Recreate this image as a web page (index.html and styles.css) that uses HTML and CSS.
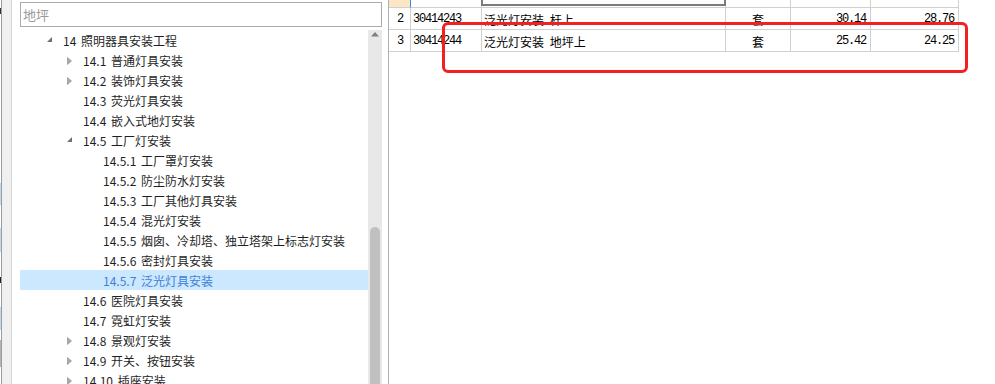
FILE: index.html
```html
<!DOCTYPE html>
<html lang="zh-CN">
<head>
<meta charset="utf-8">
<title>定额查询</title>
<link rel="stylesheet" href="styles.css">
</head>
<body>
<div class="app">
  <div class="edge"><div class="edge-strip"></div><div class="edge-line"></div><div class="edge-fill"></div></div>
  <div class="left">
    <div class="search">地坪</div>
    <div class="tree-wrap">
      <ul class="tree">
        <li class="row l0"><span class="arr"><svg width="6" height="6" viewBox="0 0 6 6"><path d="M5 0V5H0Z" class="exp"/></svg></span>14 照明器具安装工程</li>
        <li class="row l1"><span class="arr"><svg width="5" height="8" viewBox="0 0 5 8"><path d="M0.5 0.5L4.5 4L0.5 7.5Z" class="col"/></svg></span>14.1 普通灯具安装</li>
        <li class="row l1"><span class="arr"><svg width="5" height="8" viewBox="0 0 5 8"><path d="M0.5 0.5L4.5 4L0.5 7.5Z" class="col"/></svg></span>14.2 装饰灯具安装</li>
        <li class="row l1"><span class="arr"></span>14.3 荧光灯具安装</li>
        <li class="row l1"><span class="arr"></span>14.4 嵌入式地灯安装</li>
        <li class="row l1"><span class="arr"><svg width="6" height="6" viewBox="0 0 6 6"><path d="M5 0V5H0Z" class="exp"/></svg></span>14.5 工厂灯安装</li>
        <li class="row l2"><span class="arr"></span>14.5.1 工厂罩灯安装</li>
        <li class="row l2"><span class="arr"></span>14.5.2 防尘防水灯安装</li>
        <li class="row l2"><span class="arr"></span>14.5.3 工厂其他灯具安装</li>
        <li class="row l2"><span class="arr"></span>14.5.4 混光灯安装</li>
        <li class="row l2"><span class="arr"></span>14.5.5 烟囱、冷却塔、独立塔架上标志灯安装</li>
        <li class="row l2"><span class="arr"></span>14.5.6 密封灯具安装</li>
        <li class="row l2 sel"><span class="arr"></span>14.5.7 泛光灯具安装</li>
        <li class="row l1"><span class="arr"></span>14.6 医院灯具安装</li>
        <li class="row l1"><span class="arr"></span>14.7 霓虹灯安装</li>
        <li class="row l1"><span class="arr"><svg width="5" height="8" viewBox="0 0 5 8"><path d="M0.5 0.5L4.5 4L0.5 7.5Z" class="col"/></svg></span>14.8 景观灯安装</li>
        <li class="row l1"><span class="arr"><svg width="5" height="8" viewBox="0 0 5 8"><path d="M0.5 0.5L4.5 4L0.5 7.5Z" class="col"/></svg></span>14.9 开关、按钮安装</li>
        <li class="row l1"><span class="arr"><svg width="5" height="8" viewBox="0 0 5 8"><path d="M0.5 0.5L4.5 4L0.5 7.5Z" class="col"/></svg></span>14.10 插座安装</li>
      </ul>
      <div class="vscroll">
        <div class="up"><svg width="8" height="5" viewBox="0 0 8 5"><path d="M4 0L8 4.5H0Z"/></svg></div>
        <div class="thumb"></div>
      </div>
    </div>
  </div>
  <div class="split"></div>
  <div class="right">
    <div class="grid">
      <div class="c rn cur"></div>
      <div class="c"></div>
      <div class="c edit"><div class="editor"></div></div>
      <div class="c"></div>
      <div class="c"></div>
      <div class="c"></div>

      <div class="c rn">2</div>
      <div class="c code">30414243</div>
      <div class="c name"><span class="cj">泛光灯安装 杆上</span></div>
      <div class="c unit"><span class="cj">套</span></div>
      <div class="c num">30.14</div>
      <div class="c num">28.76</div>

      <div class="c rn">3</div>
      <div class="c code">30414244</div>
      <div class="c name"><span class="cj">泛光灯安装 地坪上</span></div>
      <div class="c unit"><span class="cj">套</span></div>
      <div class="c num">25.42</div>
      <div class="c num">24.25</div>
    </div>
  </div>
  <div class="mark"></div>
</div>
</body>
</html>
```

FILE: styles.css
```css
* { box-sizing: border-box; }
html, body { margin: 0; padding: 0; }
body {
  width: 995px;
  height: 384px;
  overflow: hidden;
  background: #fff;
  font-family: "Noto Sans CJK SC", "Noto Sans", sans-serif;
}
.app {
  position: relative;
  display: flex;
  height: 384px;
  overflow: hidden;
}

/* left edge strip (neighbouring window) */
.edge { display: flex; width: 12px; flex: none; }
.edge-strip {
  width: 1px;
  background: linear-gradient(to bottom,
    #fff 0, #fff 8px, #333 8px, #333 14px, #fff 14px,
    #fff 183px, #bcdcf8 183px, #bcdcf8 205px, #fff 205px,
    #fff 228px, #bcdcf8 228px, #bcdcf8 252px, #fff 252px,
    #fff 277px, #222 277px, #222 283px, #fff 283px,
    #fff 307px, #bcdcf8 307px, #bcdcf8 330px, #fff 330px,
    #fff 340px, #b4b4b4 340px, #b4b4b4 367px, #fff 367px);
}
.edge-line { width: 1px; background: #9c9c9c; }
.edge-fill { flex: 1; background: #f0f0f0; border-right: 1px solid #d6d6d6; }

/* tree panel */
.left {
  width: 376px;
  flex: none;
  padding: 2px 6px 0 8px;
  display: flex;
  flex-direction: column;
}
.search {
  height: 25px;
  border: 1px solid #ababab;
  padding: 3px 0 0 2px;
  font-size: 13px;
  line-height: 17px;
  color: #9a9a9a;
}
.tree-wrap {
  margin-top: 3px;
  flex: 1;
  display: flex;
  min-height: 0;
}
.tree {
  list-style: none;
  margin: 0;
  padding: 0;
  flex: 1;
}
.row {
  height: 20px;
  display: flex;
  align-items: center;
  font-size: 12px;
  color: #1f1f1f;
  white-space: pre;
  word-spacing: 2px;
  padding-top: 1px;
}
.row.l0 { padding-left: 27px; }
.row.l1 { padding-left: 47px; }
.row.l2 { padding-left: 67px; }
.row.sel { background: #cce8ff; color: #3f80d8; }
.arr {
  width: 16px;
  height: 20px;
  flex: none;
  display: flex;
  align-items: center;
}
.arr svg { display: block; }
.exp { fill: #707070; }
.col { fill: #a8a8a8; stroke: #8c8c8c; stroke-width: 0.6; }
.arr svg:has(.exp) { margin-top: -1px; }

.vscroll {
  width: 14px;
  flex: none;
  background: #e8e8e8;
  display: flex;
  flex-direction: column;
  align-items: center;
}
.up { height: 197px; padding-top: 2px; }
.up svg { display: block; fill: #7f7f7f; }
.thumb {
  width: 10px;
  flex: 1;
  background: #c0c0c0;
  border-radius: 5px 5px 0 0;
}

.split { width: 1px; flex: none; background: #b0b0b0; }

/* grid */
.right { flex: 1; }
.grid {
  display: grid;
  grid-template-columns: 22px 71px 244px 65px 80px 88px;
  grid-auto-rows: 22px;
  width: 570px;
  margin-top: -14px;
  font-family: "Liberation Mono", "Noto Sans CJK SC", monospace;
  font-size: 12px;
  letter-spacing: -1.2px;
  color: #000;
}
.c {
  border-right: 1px solid #d0d0d0;
  border-bottom: 1px solid #d0d0d0;
  line-height: 21px;
  white-space: nowrap;
  overflow: visible;
  padding-top: 1px;
}
.rn { text-align: center; padding-left: 1px; }
.rn.cur { background: #fde6c6; border-right-color: #3b8ae8; }
.code { padding-left: 2px; }
.name { padding-left: 2px; }
.unit { text-align: center; }
.num { text-align: right; padding-right: 4px; }
.cj {
  font-family: "Noto Sans CJK SC", sans-serif;
  letter-spacing: 0;
  word-spacing: 3px;
  font-size: 12px;
}
.edit { padding-top: 0; }
.editor {
  margin-left: -1px;
  width: 245px;
  height: 20px;
  border: 2px solid #7c7c7c;
}

/* red annotation frame */
.mark {
  position: absolute;
  left: 442px;
  top: 22px;
  width: 526px;
  height: 51px;
  border: 3px solid #f41f1f;
  border-radius: 6px;
}
```
